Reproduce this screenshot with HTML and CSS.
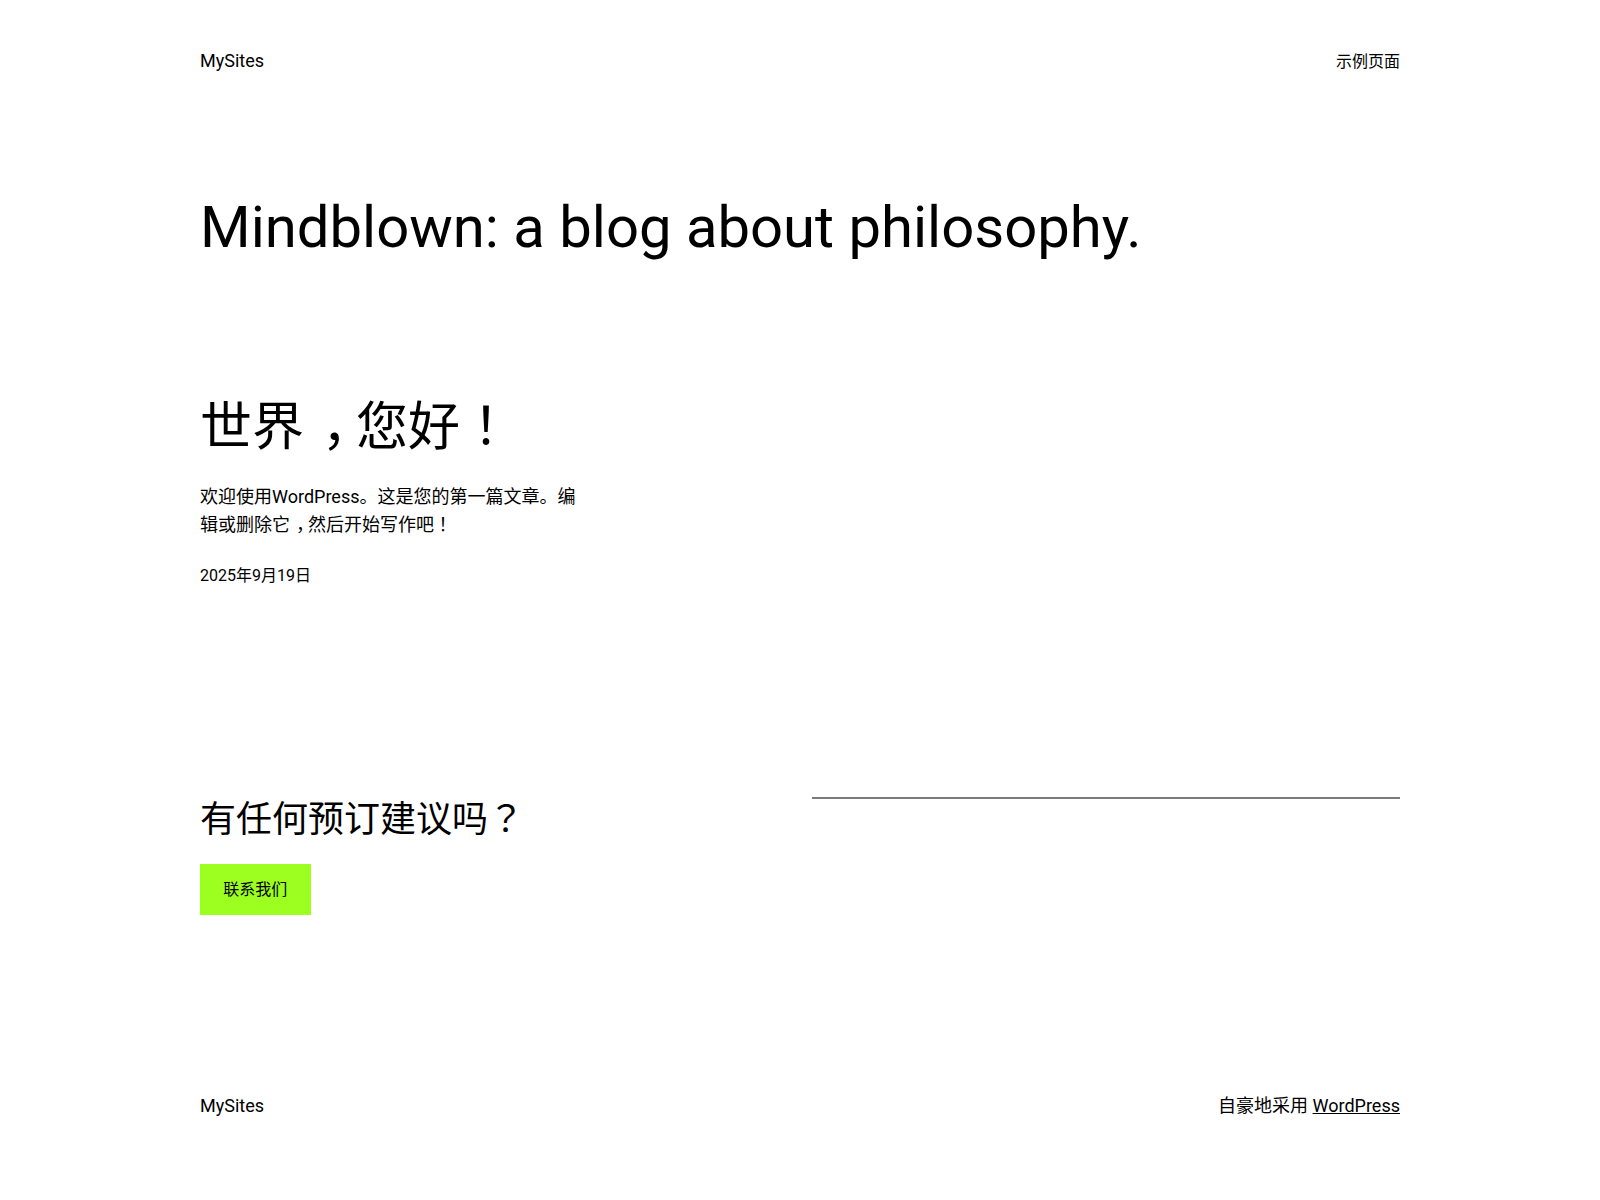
FILE: index.html
```html
<!DOCTYPE html>
<html lang="zh-CN">
<head>
<meta charset="utf-8">
<title>MySites</title>
<link rel="stylesheet" href="styles.css">
</head>
<body>
<div class="site">
  <header class="site-header">
    <a class="site-title" href="#">MySites</a>
    <nav class="site-nav"><a href="#">示例页面</a></nav>
  </header>
  <main class="site-main">
    <h1 class="page-title">Mindblown: a blog about philosophy.</h1>
    <section class="post-grid">
      <article class="post">
        <h2 class="post-title"><a href="#">世界<span class="pm-c">，</span>您好<span class="pm" lang="zh-TW">！</span></a></h2>
        <p class="post-excerpt">欢迎使用WordPress。这是您的第一篇文章。编辑或删除它<span class="pm-c">，</span>然后开始写作吧<span class="pm" lang="zh-TW">！</span></p>
        <div class="post-date">2025年9月19日</div>
      </article>
    </section>
    <section class="cta">
      <div class="cta-col">
        <h2 class="cta-title">有任何预订建议吗<span class="pm" lang="zh-TW">？</span></h2>
        <div class="buttons"><a class="button" href="#">联系我们</a></div>
      </div>
      <div class="cta-col">
        <hr class="separator">
      </div>
    </section>
  </main>
  <footer class="site-footer">
    <a class="site-title" href="#">MySites</a>
    <p class="credit">自豪地采用 <a href="#">WordPress</a></p>
  </footer>
</div>
</body>
</html>
```
FILE: styles.css
```css
html, body {
  margin: 0;
  padding: 0;
  background: #ffffff;
}
body {
  font-family: "Roboto", "Noto Sans CJK SC", sans-serif;
  font-size: 18px;
  line-height: 1.6;
  color: #000000;
}
a {
  color: #000000;
}
.pm {
  font-family: "Roboto", "Noto Sans CJK TC", sans-serif;
}
.pm-c {
  padding-left: 0.34em;
  margin-right: -0.34em;
}
.site {
  width: 1200px;
  margin: 0 auto;
}
.site-header {
  display: flex;
  justify-content: space-between;
  align-items: baseline;
  padding-top: 47px;
}
.site-title {
  font-size: 18px;
  text-decoration: none;
}
.site-nav a {
  font-size: 16px;
  text-decoration: none;
}
.page-title {
  margin: 117px 0 0;
  font-size: 58px;
  font-weight: 400;
  line-height: 1.2;
}
.post-grid {
  display: grid;
  grid-template-columns: repeat(3, 1fr);
  column-gap: 24px;
  margin-top: 135px;
}
.post-title {
  margin: 0;
  font-size: 52px;
  font-weight: 400;
  line-height: 1.2;
}
.post-title a {
  text-decoration: none;
}
.post-excerpt {
  margin: 23.5px 0 0;
  font-size: 18px;
  line-height: 1.53;
}
.post-date {
  margin-top: 25px;
  font-size: 16px;
}
.cta {
  display: flex;
  gap: 24px;
  margin-top: 208px;
}
.cta-col {
  flex: 1 1 0;
}
.cta-title {
  margin: 0;
  padding-top: 2px;
  font-size: 36px;
  font-weight: 400;
  line-height: 1.2;
}
.buttons {
  margin-top: 22px;
  display: flex;
}
.button {
  display: inline-block;
  background: #9dff20;
  color: #000000;
  font-size: 16px;
  line-height: 1.6;
  padding: 12.67px 23.33px;
  text-decoration: none;
}
.separator {
  margin: 0;
  border: 0;
  border-bottom: 2px solid #7a7a7a;
  height: 0;
}
.site-footer {
  display: flex;
  justify-content: space-between;
  align-items: baseline;
  margin-top: 177px;
  padding-bottom: 80px;
}
.credit {
  margin: 0;
  font-size: 18px;
}
.credit a {
  text-decoration: underline;
}
```
